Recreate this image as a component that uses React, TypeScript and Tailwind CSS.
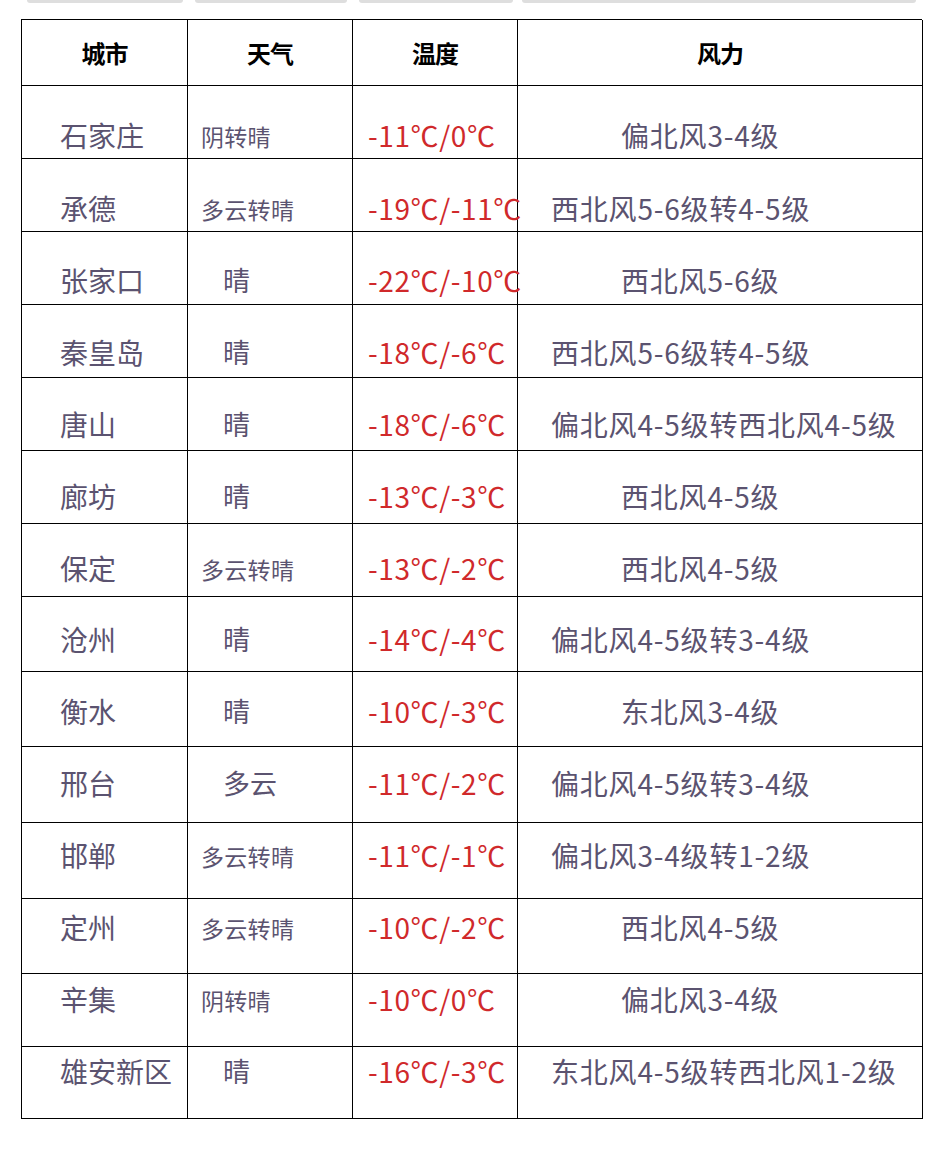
type Row = {
  city: string;
  weather: string;
  temp: string;
  wind: string;
  h: string;
  pt: string;
  small: boolean;
  long: boolean;
};

const rows: Row[] = [
  { city: "石家庄", weather: "阴转晴", temp: "-11℃/0℃", wind: "偏北风3-4级", h: "h-[73px]", pt: "pt-[33px]", small: true, long: false },
  { city: "承德", weather: "多云转晴", temp: "-19℃/-11℃", wind: "西北风5-6级转4-5级", h: "h-[73px]", pt: "pt-[33px]", small: true, long: true },
  { city: "张家口", weather: "晴", temp: "-22℃/-10℃", wind: "西北风5-6级", h: "h-[73px]", pt: "pt-[32px]", small: false, long: false },
  { city: "秦皇岛", weather: "晴", temp: "-18℃/-6℃", wind: "西北风5-6级转4-5级", h: "h-[73px]", pt: "pt-[31px]", small: false, long: true },
  { city: "唐山", weather: "晴", temp: "-18℃/-6℃", wind: "偏北风4-5级转西北风4-5级", h: "h-[73px]", pt: "pt-[30px]", small: false, long: true },
  { city: "廊坊", weather: "晴", temp: "-13℃/-3℃", wind: "西北风4-5级", h: "h-[73px]", pt: "pt-[29px]", small: false, long: false },
  { city: "保定", weather: "多云转晴", temp: "-13℃/-2℃", wind: "西北风4-5级", h: "h-[73px]", pt: "pt-[28px]", small: true, long: false },
  { city: "沧州", weather: "晴", temp: "-14℃/-4℃", wind: "偏北风4-5级转3-4级", h: "h-[75px]", pt: "pt-[26px]", small: false, long: true },
  { city: "衡水", weather: "晴", temp: "-10℃/-3℃", wind: "东北风3-4级", h: "h-[75px]", pt: "pt-[23px]", small: false, long: false },
  { city: "邢台", weather: "多云", temp: "-11℃/-2℃", wind: "偏北风4-5级转3-4级", h: "h-[76px]", pt: "pt-[20px]", small: false, long: true },
  { city: "邯郸", weather: "多云转晴", temp: "-11℃/-1℃", wind: "偏北风3-4级转1-2级", h: "h-[76px]", pt: "pt-[16px]", small: true, long: true },
  { city: "定州", weather: "多云转晴", temp: "-10℃/-2℃", wind: "西北风4-5级", h: "h-[75px]", pt: "pt-[12px]", small: true, long: false },
  { city: "辛集", weather: "阴转晴", temp: "-10℃/0℃", wind: "偏北风3-4级", h: "h-[73px]", pt: "pt-[9px]", small: true, long: false },
  { city: "雄安新区", weather: "晴", temp: "-16℃/-3℃", wind: "东北风4-5级转西北风1-2级", h: "h-[72px]", pt: "pt-[8px]", small: false, long: true },
];

const cell = "border-r-[1.5px] border-b-[1.5px] border-black";

export default function App() {
  return (
    <div className="w-[942px] h-[1150px] bg-white font-['Noto_Sans_CJK_SC',sans-serif] text-[#5b5370]">
      <div className="flex h-[3px]">
        <div className="w-[27px]" />
        <div className="w-[156px] bg-[#dedede] rounded-b" />
        <div className="w-[12px]" />
        <div className="w-[152px] bg-[#dedede] rounded-b" />
        <div className="w-[12px]" />
        <div className="w-[154px] bg-[#dedede] rounded-b" />
        <div className="w-[9px]" />
        <div className="w-[394px] bg-[#dedede] rounded-b" />
      </div>
      <div className="pt-[16px] pl-[21px]">
        <div className="grid grid-cols-[166px_165px_165px_405px] w-[901px] border-t-[1.5px] border-l-[1.5px] border-black">
          {["城市", "天气", "温度", "风力"].map((t) => (
            <div
              key={t}
              className={`${cell} h-[66px] flex items-center justify-center text-[24px] font-bold text-black tracking-[-1px] pt-[1px]`}
            >
              {t}
            </div>
          ))}
          {rows.map((r) => (
            <div key={r.city} className="contents">
              <div className={`${cell} ${r.h} ${r.pt} pl-[38px] text-[28px] leading-[32px] whitespace-nowrap`}>
                {r.city}
              </div>
              <div
                className={`${cell} ${r.h} ${r.pt} whitespace-nowrap ${
                  r.small ? "pl-[13px] text-[23px] leading-[34px] tracking-[0.3px]" : "pl-[35px] text-[27px] leading-[32px]"
                }`}
              >
                {r.weather}
              </div>
              <div className={`${cell} ${r.h} ${r.pt} pl-[15px] text-[28px] leading-[32px] text-[#d0292b] tracking-[0.6px] whitespace-nowrap overflow-visible relative z-10`}>
                {r.temp}
              </div>
              <div
                className={`${cell} ${r.h} ${r.pt} text-[28px] leading-[32px] whitespace-nowrap tracking-[0.8px] ${
                  r.long ? "pl-[33px]" : "pl-[103px]"
                }`}
              >
                {r.wind}
              </div>
            </div>
          ))}
        </div>
      </div>
    </div>
  );
}
